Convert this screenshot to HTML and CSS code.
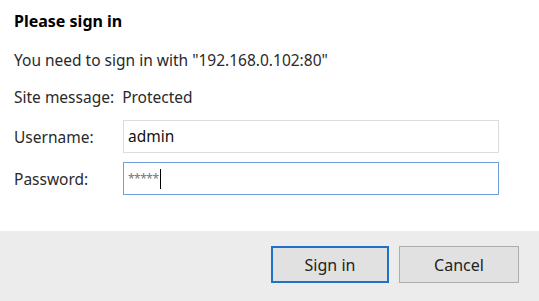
FILE: index.html
```html
<!DOCTYPE html>
<html lang="en">

<head>
  <meta charset="UTF-8">
  <meta name="viewport" content="width=device-width, initial-scale=1.0">
  <title>Sign in</title>
  <link rel="stylesheet" href="styles.css">
</head>

<body>
  <div class="dialog">
    <div class="content">
      <h1 class="title">Please sign in</h1>
      <p class="msg">You need to sign in with "192.168.0.102:80"</p>
      <p class="msg">Site message:&nbsp; Protected</p>
      <div class="field">
        <label class="label">Username:</label>
        <div class="input">admin</div>
      </div>
      <div class="field">
        <label class="label">Password:</label>
        <div class="input focus"><span class="stars">*****</span><span class="caret"></span></div>
      </div>
    </div>
    <div class="footer">
      <button class="btn primary">Sign in</button>
      <button class="btn">Cancel</button>
    </div>
  </div>
</body>

</html>
```

FILE: styles.css
```css
html,
body {
  margin: 0;
  padding: 0;
  background: #fff;
}

.dialog {
  width: 539px;
  height: 301px;
  display: flex;
  flex-direction: column;
  font-family: "Noto Sans", "Open Sans", sans-serif;
  font-size: 15.5px;
  color: #2a2a2a;
}

.content {
  padding: 9px 14px 0;
  height: 222px;
}

.title {
  margin: 0;
  font-size: 16px;
  font-weight: bold;
  color: #000;
  line-height: 24px;
}

.msg {
  margin: 0;
  line-height: 22px;
  margin-top: 16px;
}

.msg + .msg {
  margin-top: 15px;
}

.field {
  display: flex;
  align-items: center;
  margin-top: 9px;
}

.field:first-of-type {
  margin-top: 12px;
}

.label {
  width: 109px;
}

.input {
  width: 366px;
  height: 31px;
  border: 1px solid #dcdcdc;
  padding: 0 4px;
  line-height: 31px;
  color: #111;
}

.input.focus {
  border-color: #6f9ed8;
  display: flex;
  align-items: center;
}

.stars {
  color: #777;
  font-size: 12px;
  letter-spacing: -0.5px;
}

.caret {
  display: inline-block;
  width: 1px;
  height: 20px;
  background: #000;
  margin-left: 1px;
}

.footer {
  flex: 1;
  background: #ececec;
  display: flex;
  justify-content: flex-end;
  align-items: flex-start;
  padding: 15px 20px 0 0;
  gap: 10px;
}

.btn {
  width: 120px;
  height: 37px;
  background: #e1e1e1;
  border: 1px solid #adadad;
  font-family: "Noto Sans", "Open Sans", sans-serif;
  font-size: 16px;
  color: #222;
  padding: 0;
}

.btn.primary {
  width: 118px;
  border: 2px solid #1e72c8;
}
```
